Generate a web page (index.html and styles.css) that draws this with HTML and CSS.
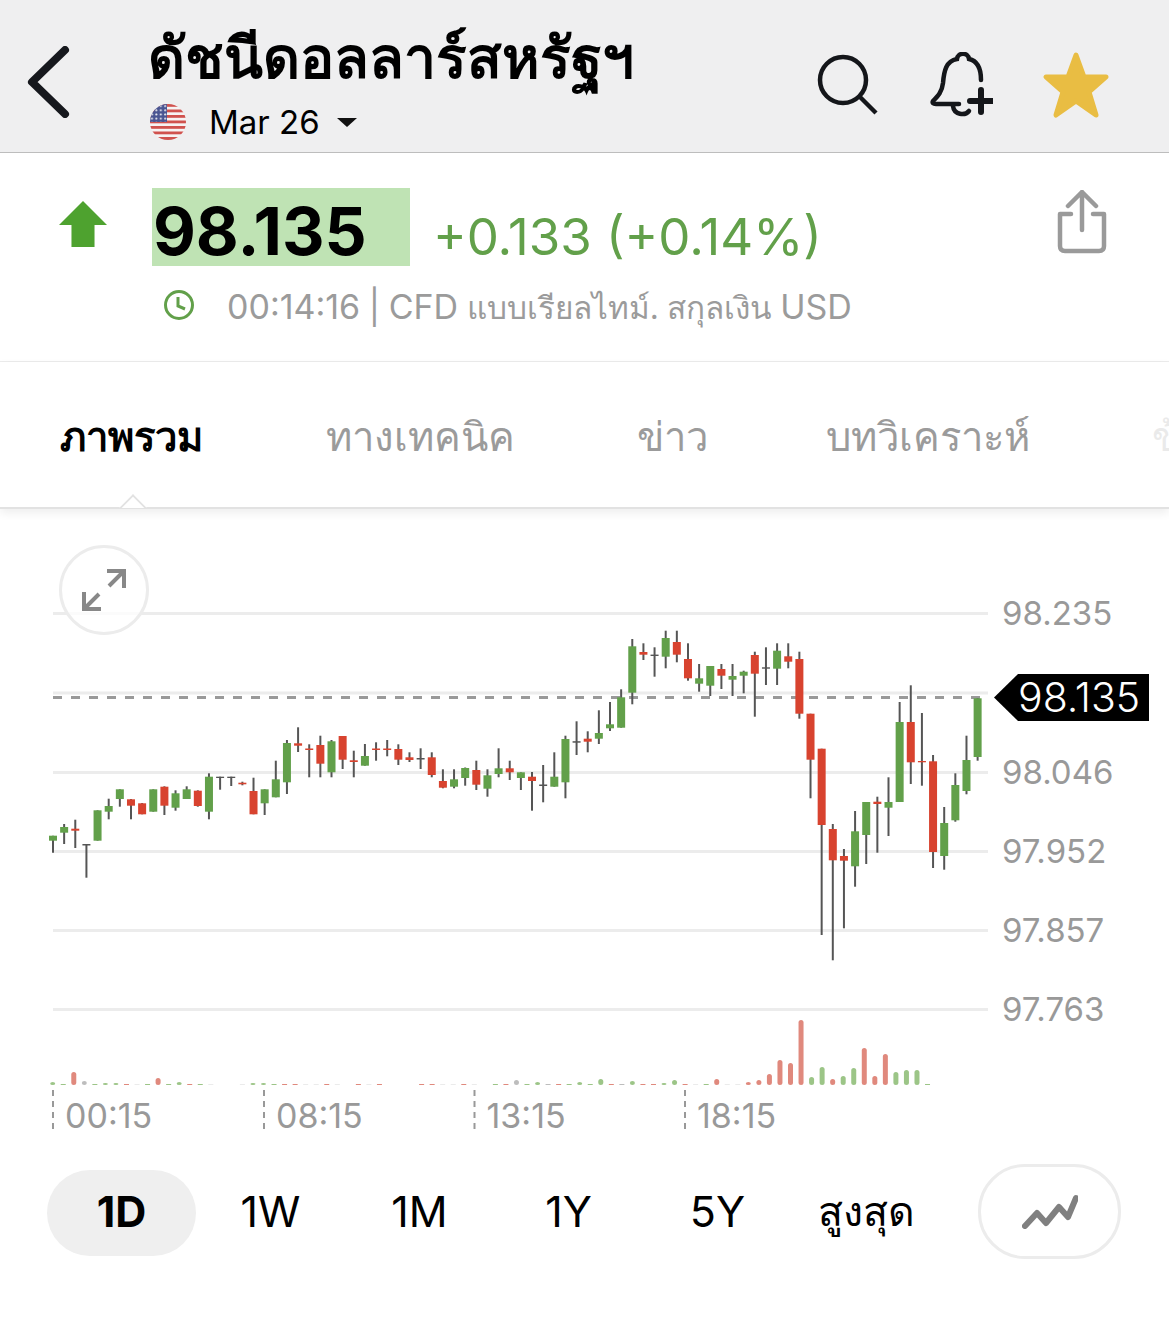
FILE: index.html
```html
<!DOCTYPE html>
<html lang="th">
<head>
    <meta charset="UTF-8">
    <meta name="viewport" content="width=device-width, initial-scale=1.0">
    <title>ดัชนีดอลลาร์สหรัฐฯ</title>
    <link rel="stylesheet" href="styles.css">
</head>
<body>
    <header class="topbar">
        <svg class="back-icon" viewBox="0 0 44 72"><path d="M38 4 L5 36 L38 68"/></svg>
        <div class="instrument">
            <h1>ดัชนีดอลลาร์สหรัฐฯ</h1>
            <div class="contract">
                <svg class="flag" viewBox="0 0 36 36">
                    <defs>
                        <clipPath id="flagClip"><circle cx="18" cy="18" r="18"/></clipPath>
                        <pattern id="flagStars" width="4.4" height="4.2" patternUnits="userSpaceOnUse">
                            <circle cx="2" cy="2" r="1" fill="#e8e8ee"/>
                        </pattern>
                    </defs>
                    <g clip-path="url(#flagClip)">
                        <rect width="36" height="36" fill="#f6f3f3"/>
                        <rect y="0" width="36" height="2.8" fill="#d0524e"/>
                        <rect y="5.5" width="36" height="2.8" fill="#d0524e"/>
                        <rect y="11" width="36" height="2.8" fill="#d0524e"/>
                        <rect y="16.5" width="36" height="2.8" fill="#d0524e"/>
                        <rect y="22" width="36" height="2.8" fill="#d0524e"/>
                        <rect y="27.5" width="36" height="2.8" fill="#d0524e"/>
                        <rect y="33" width="36" height="3" fill="#d0524e"/>
                        <rect width="17" height="18" fill="#4a5592"/>
                        <rect width="17" height="18" fill="url(#flagStars)"/>
                    </g>
                </svg>
                <span class="contract-name">Mar 26</span>
                <span class="caret"></span>
            </div>
        </div>
        <div class="actions">
            <svg class="search-icon" viewBox="0 0 62 62"><circle cx="26" cy="26" r="23"/><path d="M43 43 L59 59"/></svg>
            <svg class="bell-icon" viewBox="0 0 64 66">
                <path d="M52 28 C52 18 49 9 40 7 C39 0 29 0 28 7 C17 9 15 19 14 31 C13 40 9 44 4 49 C3 51 4 52 7 52 L30 52"/>
                <path d="M24 54 C25 63 36 64 40 59"/>
                <path class="bell-plus" d="M52 38 L52 60 M41 49 L63 49"/>
            </svg>
            <svg class="star-icon" viewBox="0 0 68 68"><path d="M34 4 L42 26 L64 26 L47 41 L54 64 L34 50 L14 64 L21 41 L4 26 L26 26 Z"/></svg>
        </div>
    </header>

    <section class="quote">
        <div class="quote-main">
            <svg class="up-arrow" viewBox="0 0 50 48"><path d="M25 0 L50 25 L37 25 L37 48 L13 48 L13 25 L0 25 Z"/></svg>
            <div class="price">98.135</div>
            <div class="change">+0.133 (+0.14%)</div>
            <svg class="share-icon" viewBox="0 0 50 64">
                <path d="M25 40 L25 2 M11 16 L25 2 L39 16"/>
                <path d="M14 24 L3 24 L3 56 Q3 61 8 61 L42 61 Q47 61 47 56 L47 24 L36 24"/>
            </svg>
        </div>
        <div class="quote-meta">
            <svg class="clock-icon" viewBox="0 0 32 32"><circle cx="16" cy="16" r="13.5"/><path d="M15 8 L15 17 L22 20"/></svg>
            <span class="meta-text">00:14:16 | CFD <span class="meta-thai">แบบเรียลไทม์. สกุลเงิน</span> USD</span>
        </div>
    </section>

    <nav class="tabs">
        <div class="tab-list">
            <a class="tab tab-active" href="#">ภาพรวม</a>
            <a class="tab tab-technical" href="#">ทางเทคนิค</a>
            <a class="tab tab-news" href="#">ข่าว</a>
            <a class="tab tab-analysis" href="#">บทวิเคราะห์</a>
            <a class="tab tab-more" href="#">ข้อมูล</a>
        </div>
    </nav>

    <section class="chart">
        <button class="expand-btn">
            <svg viewBox="0 0 44 42"><path d="M25 2 L42 2 L42 19 M41 3 L27 17"/><path d="M2 23 L2 40 L19 40 M3 39 L17 25"/></svg>
        </button>
        <svg id="chartArea" class="chart-area" viewBox="0 509 1169 650"></svg>
    </section>

    <div class="ranges">
        <button class="range range-active">1D</button>
        <button class="range">1W</button>
        <button class="range">1M</button>
        <button class="range">1Y</button>
        <button class="range">5Y</button>
        <button class="range range-thai">สูงสุด</button>
        <button class="chart-type">
            <svg viewBox="0 0 56 36"><path d="M3 33 L15 20 L24 30 L37 14 L46 24 L54 5"/></svg>
        </button>
    </div>

    <script src="chart.js"></script>
</body>
</html>
```

FILE: styles.css
```css
/* Ajustes gerais */
* {
    box-sizing: border-box;
}

body {
    margin: 0;
    background: #fff;
    color: #000;
    font-family: 'Inter', 'Noto Sans', 'DejaVu Sans', sans-serif;
    overflow-x: hidden;
}

/* Top bar */
.topbar {
    display: flex;
    align-items: flex-start;
    height: 153px;
    padding: 0 59px 0 27px;
    background: #efeff0;
    border-bottom: 1px solid #bdbdbd;
}

.back-icon {
    width: 44px;
    height: 72px;
    margin-top: 46px;
    fill: none;
    stroke: #16181d;
    stroke-width: 8;
    stroke-linecap: round;
    stroke-linejoin: round;
}

.instrument {
    margin-left: 79px;
    flex: 1;
}

.instrument h1 {
    margin: 24px 0 0 -2px;
    height: 68px;
    font-size: 57px;
    line-height: 68px;
    font-weight: 700;
    white-space: nowrap;
}

.contract {
    display: flex;
    align-items: center;
    margin-top: 12px;
    height: 36px;
}

.flag {
    width: 36px;
    height: 36px;
}

.contract-name {
    margin-left: 23px;
    font-size: 33px;
}

.caret {
    margin-left: 17px;
    border-left: 10px solid transparent;
    border-right: 10px solid transparent;
    border-top: 9px solid #111;
}

.actions {
    display: flex;
    align-items: flex-start;
    margin-top: 51px;
}

.search-icon {
    width: 62px;
    height: 62px;
    margin-top: 3px;
    fill: none;
    stroke: #14161a;
    stroke-width: 4.5;
}

.bell-icon {
    width: 64px;
    height: 66px;
    margin: 1px 0 0 50px;
    fill: none;
    stroke: #14161a;
    stroke-width: 4.5;
    stroke-linecap: round;
}

.bell-plus {
    stroke-width: 6;
}

.star-icon {
    width: 68px;
    height: 68px;
    margin-left: 49px;
    fill: #e9bd43;
    stroke: #e9bd43;
    stroke-width: 5;
    stroke-linejoin: round;
}

/* Quote block */
.quote {
    height: 209px;
    border-bottom: 1px solid #ececec;
    padding: 35px 62px 0 59px;
}

.quote-main {
    display: flex;
    align-items: flex-start;
    height: 78px;
}

.up-arrow {
    width: 48px;
    height: 48px;
    margin-top: 12px;
    fill: #4ea22f;
}

.price {
    width: 258px;
    height: 78px;
    margin-left: 45px;
    padding-left: 1px;
    background: #bfe3b4;
    font-size: 66px;
    line-height: 86px;
    font-weight: 700;
}

.change {
    margin-left: 23px;
    color: #62a04a;
    font-size: 51px;
    line-height: 98px;
}

.share-icon {
    width: 50px;
    height: 64px;
    margin: 2px 0 0 auto;
    fill: none;
    stroke: #9a9a9a;
    stroke-width: 4.5;
    stroke-linecap: round;
    stroke-linejoin: round;
}

.quote-meta {
    display: flex;
    align-items: center;
    margin: 23px 0 0 104px;
    height: 38px;
    color: #9b9b9b;
    font-size: 34px;
    word-spacing: -1px;
}

.meta-text {
    margin-left: 32px;
    white-space: nowrap;
}

.meta-thai {
    font-size: 31.5px;
}

.clock-icon {
    width: 32px;
    height: 32px;
    margin-top: -6px;
    fill: none;
    stroke: #62a04a;
    stroke-width: 3;
}

/* Tabs */
.tabs {
    position: relative;
    height: 147px;
    border-bottom: 2px solid #e2e2e2;
    box-shadow: 0 4px 9px rgba(0, 0, 0, 0.07);
}

.tab-list {
    display: flex;
    height: 100%;
    padding-left: 60px;
    overflow: hidden;
    font-size: 40px;
    white-space: nowrap;
}

.tab {
    color: #9b9b9b;
    text-decoration: none;
    line-height: 150px;
}

.tab-active {
    color: #000;
    font-weight: 700;
}

.tab-technical {
    margin-left: 123px;
}

.tab-news {
    margin-left: 122px;
}

.tab-analysis {
    margin-left: 118px;
}

.tab-more {
    margin-left: 122px;
    opacity: 0.2;
}

/* Notch under the current tab */
.tabs::after {
    content: "";
    position: absolute;
    left: 123px;
    bottom: -11px;
    width: 18px;
    height: 18px;
    background: #fff;
    border-top: 2px solid #e2e2e2;
    border-left: 2px solid #e2e2e2;
    clip-path: polygon(0 0, 100% 0, 0 100%);
    transform: rotate(45deg);
}

/* Chart */
.chart {
    position: relative;
    height: 650px;
}

.chart-area {
    display: block;
    width: 1169px;
    height: 650px;
}

.expand-btn {
    position: absolute;
    left: 59px;
    top: 36px;
    z-index: 2;
    width: 90px;
    height: 90px;
    padding: 0;
    background: rgba(255, 255, 255, 0.8);
    border: 3px solid #ececec;
    border-radius: 50%;
}

.expand-btn svg {
    display: block;
    width: 44px;
    height: 42px;
    margin: 0 auto;
    fill: none;
    stroke: #888;
    stroke-width: 4;
}

.grid-line {
    stroke: #ececec;
    stroke-width: 3;
}

.price-line {
    stroke: #999;
    stroke-width: 3;
    stroke-dasharray: 9 9;
}

.axis-tick {
    stroke: #999;
    stroke-width: 2;
    stroke-dasharray: 6 5;
}

.wick {
    stroke: #555;
    stroke-width: 2;
}

.up {
    fill: #62a04a;
}

.down {
    fill: #d8432f;
}

.flat {
    fill: #555;
}

.vol-up {
    fill: #9cc587;
}

.vol-down {
    fill: #e0897d;
}

.vol-flat {
    fill: #bdbdbd;
}

.axis-label {
    fill: #999;
    font-size: 33px;
}

.time-label {
    fill: #999;
    font-size: 34px;
}

.price-tag {
    fill: #000;
}

.price-tag-text {
    fill: #fff;
    font-size: 41px;
    font-weight: 300;
}

/* Range selector */
.ranges {
    display: flex;
    align-items: center;
    height: 98px;
    padding: 0 48px 0 47px;
    margin-top: 4px;
}

.range {
    width: 149px;
    height: 86px;
    margin-top: 2px;
    padding: 0 0 4px;
    background: none;
    border: none;
    border-radius: 43px;
    color: #000;
    font-family: inherit;
    font-size: 43px;
}

.range-thai {
    font-size: 41px;
}

.range-active {
    background: #efefef;
    font-weight: 700;
}

.chart-type {
    width: 143px;
    height: 95px;
    margin: 0 0 2px auto;
    padding: 0;
    background: #fff;
    border: 3px solid #ececec;
    border-radius: 47px;
}

.chart-type svg {
    display: block;
    width: 56px;
    height: 36px;
    margin: 0 auto;
    fill: none;
    stroke: #808080;
    stroke-width: 6;
    stroke-linecap: round;
    stroke-linejoin: round;
}
```

FILE: chart.js
```js
// Draws the candles, volume bars, grid and axis labels into #chartArea
const svgNs = 'http://www.w3.org/2000/svg';
const chartArea = document.getElementById('chartArea');

function add(tag, attrs, text) {
    const el = document.createElementNS(svgNs, tag);
    for (const key in attrs) el.setAttribute(key, attrs[key]);
    if (text) el.textContent = text;
    chartArea.appendChild(el);
    return el;
}

// [body top, body bottom, wick top, wick bottom, kind]
const candles = [
    [835.7, 840.7, 835.7, 852.7, 'up'], [827, 832.7, 824, 844, 'up'], [828.7, 830.7, 819.7, 848, 'down'],
    [844, 845.5, 844.3, 877.7, 'flat'], [810.3, 840.7, 810.3, 840.7, 'up'], [806, 811.7, 798.7, 819.3, 'up'],
    [789.3, 799, 789.3, 806.7, 'up'], [799.3, 805.7, 799, 819.3, 'down'], [803.3, 814.3, 803, 814.3, 'down'],
    [789.3, 811.7, 789.3, 811.7, 'up'], [786.7, 805.7, 786.3, 815, 'down'], [793.3, 807.7, 790.3, 810.7, 'up'],
    [789.3, 799, 786.3, 799, 'up'], [790.7, 806, 790.3, 806.7, 'down'], [776.7, 811.7, 773.3, 819.3, 'up'],
    [776.7, 778, 776.7, 789.7, 'flat'], [776.7, 778, 776.7, 786, 'flat'], [782.7, 784.3, 781.7, 785.3, 'down'],
    [791, 814.3, 777.7, 814.3, 'down'], [789.3, 803.3, 789.3, 815, 'up'], [779.3, 797.3, 760.7, 797.3, 'up'],
    [743, 782.3, 740, 794, 'up'], [743.3, 745.7, 727.3, 752, 'down'], [748.5, 750, 744.3, 777.3, 'down'],
    [745, 763.7, 735.7, 777.3, 'down'], [741.3, 772.3, 740, 777.3, 'up'], [736, 759.7, 736, 769, 'down'],
    [760.3, 762, 750.7, 777.3, 'down'], [756, 765.7, 744, 765.7, 'up'], [748.5, 750, 742.3, 760.7, 'down'],
    [748.5, 750, 740, 756.3, 'down'], [749, 759.7, 744.3, 765, 'down'], [757.3, 760, 752.3, 762, 'down'],
    [758, 759.5, 748.3, 769, 'flat'], [757.3, 775, 752.3, 777.3, 'down'], [781, 787.7, 769.3, 788.3, 'down'],
    [779.3, 786.7, 769.3, 788.3, 'up'], [768, 778, 767.5, 785.7, 'up'], [770, 784.7, 760.7, 790, 'down'],
    [775.3, 788.7, 769.3, 796.7, 'up'], [768.3, 774, 748.3, 777.3, 'up'], [768.3, 772.3, 760.7, 780, 'down'],
    [772.3, 778, 772.3, 790, 'up'], [776.7, 781, 772, 810.7, 'down'], [784.5, 786, 765, 802.3, 'flat'],
    [776.7, 786.7, 752.3, 786.7, 'up'], [739, 782.3, 735.7, 798.3, 'up'], [741.2, 742.7, 721.3, 755, 'flat'],
    [738.7, 741.7, 731.3, 752.3, 'down'], [733, 738.7, 710.3, 744, 'up'], [724.3, 728.3, 702, 731, 'up'],
    [697.3, 727.7, 689.3, 727.7, 'up'], [646.3, 692.7, 639, 704.3, 'up'], [652, 654.7, 643.3, 660, 'down'],
    [654.6, 656, 647.3, 676.7, 'flat'], [638, 656.7, 630.7, 668.3, 'up'], [642, 654.7, 630.7, 662.3, 'down'],
    [659, 678.3, 643.3, 680.7, 'down'], [678.3, 683.7, 664, 691.7, 'up'], [666, 685.7, 666, 696, 'up'],
    [669, 675.7, 664, 689, 'down'], [676, 679.7, 664, 696, 'up'], [671.7, 675.7, 670.7, 693.3, 'up'],
    [655, 673.7, 651.7, 716.7, 'down'], [667.3, 668.7, 647.3, 685, 'flat'], [650.7, 668.7, 643.3, 685, 'up'],
    [656.3, 661.7, 643.3, 668.3, 'down'], [659, 713.7, 651.7, 718.7, 'down'], [713.7, 759.7, 713.7, 798.3, 'down'],
    [748.7, 825, 748.7, 935, 'down'], [829, 860.3, 824, 960.3, 'down'], [856, 860.7, 849, 928.3, 'down'],
    [831.3, 866.3, 811, 886.7, 'up'], [802, 835, 802, 864, 'up'], [801.7, 804, 796.7, 852.7, 'down'],
    [802, 807.7, 777.3, 836, 'up'], [722, 802, 702, 802, 'up'], [722, 762.3, 685.3, 784, 'down'],
    [761, 762.3, 713, 785.7, 'down'], [761.3, 852, 755, 868, 'down'], [823, 856, 807, 869.7, 'up'],
    [785, 820.3, 773.3, 821.7, 'up'], [760, 791, 735.7, 794.3, 'up'], [698.3, 757, 698.3, 760.7, 'up']
];

// volume per bar: kind initial and height, empty leaves a gap in the row
const volumes = [
    'u3', 'u1', 'd13', 'f4', 'u1', 'u2', 'u2', 'd1', 'n1', 'u1', 'd7', 'u1', 'u3', 'd1', 'u1', 'n1', '', '', 'n1', 'u2',
    'u2', 'u1', 'd1', 'd1', 'n1', 'n1', 'd1', 'n1', '', 'd1', 'n1', 'd1', '', '', '', 'd1', 'd1', 'n1', 'n1', 'd1',
    'n1', '', 'u1', 'd1', 'f5', 'u1', 'u3', 'f1', 'd1', 'u1', 'u3', 'u1', 'u6', 'd1', 'f1', 'u4', 'd1', 'd1', 'u2', 'u5',
    'd1', 'n1', 'u1', 'd6', 'n1', 'n1', 'd3', 'd5', 'd11', 'd25', 'd22', 'd65', 'u8', 'u18', 'd6', 'u9', 'u17', 'd37', 'd9', 'd31',
    'u13', 'u15', 'u15', 'u1'
];

const gridLines = [[613.5, '98.235'], [693, ''], [772.5, '98.046'], [851.5, '97.952'], [930.5, '97.857'], [1009.5, '97.763']];
gridLines.forEach(([y, label]) => {
    add('line', { x1: 53, x2: 988, y1: y, y2: y, class: 'grid-line' });
    if (label) add('text', { x: 1002, y: y + 11, class: 'axis-label' }, label);
});

add('line', { x1: 53, x2: 988, y1: 697.5, y2: 697.5, class: 'price-line' });

const kindClass = { u: 'vol-up', d: 'vol-down', f: 'vol-flat' };
volumes.forEach((vol, i) => {
    if (!vol) return;
    const kind = vol[0];
    const h = parseInt(vol.slice(1));
    const x = 50.2 + 10.54 * i;
    const attrs = { x: x, y: 1085 - h, width: 5, height: h, rx: h > 1 ? 2.5 : 0, class: kindClass[kind] || 'vol-flat' };
    if (kind === 'n') attrs.opacity = 0.3;
    add('rect', attrs);
});

candles.forEach(([top, bottom, high, low, kind], i) => {
    const x = 53 + 11.14 * i;
    add('line', { x1: x, x2: x, y1: high, y2: low, class: 'wick' });
    add('rect', { x: x - 4, y: top, width: 8, height: bottom - top, class: kind });
});

[[53, '00:15'], [264, '08:15'], [474.5, '13:15'], [685, '18:15']].forEach(([x, label]) => {
    add('line', { x1: x, x2: x, y1: 1090, y2: 1133, class: 'axis-tick' });
    add('text', { x: x + 12, y: 1128, class: 'time-label' }, label);
});

add('path', { d: 'M994 697.5 L1018 674 L1149 674 L1149 721 L1018 721 Z', class: 'price-tag' });
add('text', { x: 1018, y: 712, class: 'price-tag-text' }, '98.135');
```
